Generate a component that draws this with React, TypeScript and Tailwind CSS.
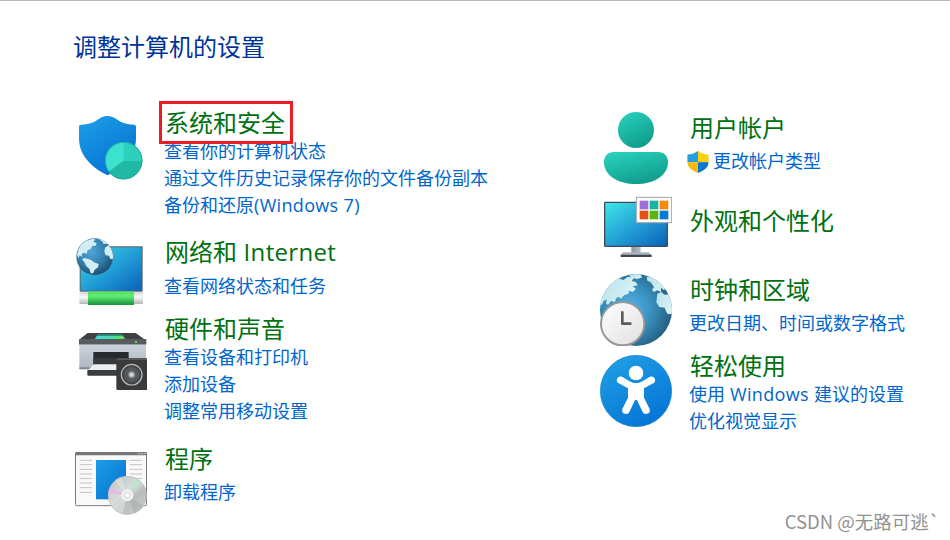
import type { ReactNode } from "react";
import clsx from "clsx";

type CategoryProps = {
  title: string;
  links?: string[];
  icon: ReactNode;
  className?: string;
  iconClass?: string;
  textClass?: string;
  listClass?: string;
  highlighted?: boolean;
  shielded?: boolean;
};

function SecurityIcon() {
  return (
    <svg viewBox="45 51 216 216" className="size-[72px]">
      <defs>
        <linearGradient id="sec" x1="0" y1="0" x2="0.6" y2="1">
          <stop offset="0" stopColor="#1ca0e8" />
          <stop offset="1" stopColor="#0672d3" />
        </linearGradient>
        <clipPath id="secPie"><circle cx="191" cy="197" r="56" /></clipPath>
      </defs>
      <path d="M142 63c-12 0-19 4-27 10-15 11-30 16-52 16-4 0-6 2-6 6v35c0 52 38 88 86 111 47-23 85-59 85-111V95c0-4-2-6-6-6-22 0-37-5-52-16-8-6-16-10-28-10Z" fill="url(#sec)" />
      <g clipPath="url(#secPie)">
        <rect x="135" y="140" width="113" height="114" fill="#3be2cd" />
        <path d="M191 197h60v60H120v-8Z" fill="#1fb9a5" />
        <path d="M191 197h60v-60h-60Z" fill="#2dd0bb" />
      </g>
      <circle cx="191" cy="197" r="55" fill="none" stroke="#1aa597" strokeWidth="2.5" />
    </svg>
  );
}

function NetworkIcon() {
  return (
    <svg viewBox="27 18 216 216" className="size-[72px]">
      <defs>
        <linearGradient id="netScreen" x1="0" y1="0" x2="1" y2="1">
          <stop offset="0" stopColor="#3bd5e4" />
          <stop offset="0.5" stopColor="#229fd6" />
          <stop offset="1" stopColor="#0a60bd" />
        </linearGradient>
        <radialGradient id="netGlobe" cx="0.4" cy="0.35" r="0.68">
          <stop offset="0" stopColor="#51a6d8" />
          <stop offset="0.55" stopColor="#3581b0" />
          <stop offset="1" stopColor="#1d4e70" />
        </radialGradient>
        <linearGradient id="cable" x1="0" y1="0" x2="0" y2="1">
          <stop offset="0" stopColor="#4fdc62" />
          <stop offset="0.35" stopColor="#62ef74" />
          <stop offset="1" stopColor="#14903a" />
        </linearGradient>
        <linearGradient id="plug" x1="0" y1="0" x2="0" y2="1">
          <stop offset="0" stopColor="#d5d5d5" />
          <stop offset="0.4" stopColor="#fafafa" />
          <stop offset="1" stopColor="#b5b5b5" />
        </linearGradient>
        <clipPath id="netClip"><circle cx="86" cy="80" r="55" /></clipPath>
      </defs>
      <rect x="41" y="49" width="189" height="136" rx="3" fill="#59656e" />
      <rect x="44" y="52" width="183" height="130" fill="url(#netScreen)" />
      <rect x="40" y="187" width="191" height="35" rx="3" fill="url(#plug)" />
      <rect x="66" y="184" width="138" height="41" fill="url(#cable)" />
      <circle cx="86" cy="80" r="55" fill="url(#netGlobe)" />
      <g clipPath="url(#netClip)" fill="#d3edf2">
        <path d="M38 57 45 44 59 33 78 27 88 28 82 36 92 39 88 48 79 47 74 57 65 60 62 71 54 68 47 72 49 81 41 76 38 85 33 74Z" />
        <path d="M48 87 57 84 66 87 76 90 84 97 98 102 96 112 86 119 81 130 74 130 70 116 61 109 56 98Z" />
        <path d="M117 53 126 46 133 51 142 65 142 88 133 87 129 77 119 76 115 65Z" />
        <path d="M97 27 111 30 121 36 124 42 112 41 110 35Z" />
      </g>
    </svg>
  );
}

function HardwareIcon() {
  return (
    <svg viewBox="27 15 216 216" className="size-[72px]">
      <defs>
        <linearGradient id="prnBody" x1="0" y1="0" x2="0" y2="1">
          <stop offset="0" stopColor="#cad2da" />
          <stop offset="1" stopColor="#aeb8c3" />
        </linearGradient>
        <linearGradient id="prnGlow" x1="0" y1="0" x2="1" y2="0">
          <stop offset="0" stopColor="#3fd8dc" />
          <stop offset="0.6" stopColor="#4ade9d" />
          <stop offset="1" stopColor="#67df48" />
        </linearGradient>
        <radialGradient id="cone">
          <stop offset="0" stopColor="#f2f5f7" />
          <stop offset="0.5" stopColor="#b0b7bd" />
          <stop offset="1" stopColor="#596067" />
        </radialGradient>
      </defs>
      <path d="M65 39h144l28 20H39Z" fill="#3d4143" />
      <path d="M96 43h72l9 14H86Z" fill="url(#prnGlow)" />
      <path d="M96 43h72l3 4H93Z" fill="#23736d" />
      <rect x="39" y="57" width="202" height="17" rx="2" fill="#585c5f" />
      <rect x="207" y="63" width="6" height="6" fill="#4cf01c" />
      <rect x="40" y="74" width="200" height="73" fill="url(#prnBody)" />
      <rect x="40" y="142" width="200" height="6" fill="#7e8790" />
      <path d="M82 96h106v46H82Z" fill="#272a2c" />
      <path d="M82 114h106v22H82Z" fill="#36393b" />
      <path d="M83 133h82v18H66Z" fill="#eeeeee" />
      <path d="M64 150h98v17H67q-3 0-3-3Z" fill="#3b3e40" />
      <rect x="151" y="115" width="93" height="95" rx="4" fill="#3a3a3a" />
      <path d="M155 115h85l4 5h-93Z" fill="#57595a" />
      <circle cx="197" cy="164" r="31" fill="#424547" stroke="#b3babd" strokeWidth="3.5" />
      <circle cx="197" cy="164" r="23" fill="#54595c" />
      <circle cx="197" cy="164" r="12" fill="url(#cone)" />
    </svg>
  );
}

function ProgramsIcon() {
  return (
    <svg viewBox="27 21 216 216" className="size-[72px]">
      <defs>
        <linearGradient id="progPage" x1="0" y1="0" x2="1" y2="1">
          <stop offset="0" stopColor="#1c9ee6" />
          <stop offset="1" stopColor="#086fcd" />
        </linearGradient>
        <linearGradient id="disc" x1="0.1" y1="0" x2="0.9" y2="1">
          <stop offset="0" stopColor="#bfc4c3" />
          <stop offset="0.45" stopColor="#d9dddc" />
          <stop offset="0.6" stopColor="#b9bdbc" />
          <stop offset="1" stopColor="#c9cdcc" />
        </linearGradient>
        <clipPath id="discClip"><circle cx="184" cy="166" r="58" /></clipPath>
      </defs>
      <rect x="28.5" y="38" width="213" height="159" rx="3" fill="#f9f9f9" stroke="#7e7c7b" strokeWidth="3" />
      <path d="M28 46v-6q0-4 4-4h206q4 0 4 4v6Z" fill="#7a7675" />
      <path d="M217 41h5M225 41h5M233 41h5" stroke="#d7d7d7" strokeWidth="3" />
      <path d="M41 61h37M41 74h37M41 88h37M41 102h37M41 115h37M41 129h37M41 143h37M41 157h37M191 61h37M191 74h37M191 88h37M191 102h37M191 115h37" stroke="#c3c3c3" strokeWidth="3" />
      <rect x="90" y="60" width="90" height="118" fill="url(#progPage)" />
      <circle cx="184" cy="166" r="58" fill="url(#disc)" />
      <g clipPath="url(#discClip)">
        <path d="M184 166 123 157l5-15Z" fill="#e9b9e4" />
        <path d="M184 166 209 112l19 16Z" fill="#bfe3cc" />
        <path d="M184 166 210 232l32-28Z" fill="#a2a6a6" opacity=".45" />
        <path d="M184 166 132 106l30-5Z" fill="#e6e9e8" opacity=".5" />
        <path d="M184 166 130 210l38 20Z" fill="#e2e5e4" opacity=".6" />
      </g>
      <circle cx="184" cy="166" r="57" fill="none" stroke="#b3b7b7" strokeWidth="1.5" />
      <circle cx="184" cy="166" r="18" fill="#f2f3f3" />
      <circle cx="184" cy="166" r="11" fill="#dfe1e1" />
      <circle cx="184" cy="166" r="6" fill="#ffffff" />
    </svg>
  );
}

function UserIcon() {
  return (
    <svg viewBox="18 36 216 216" className="size-[72px]">
      <defs>
        <linearGradient id="user" x1="0.2" y1="0" x2="0.7" y2="1">
          <stop offset="0" stopColor="#27d0bd" />
          <stop offset="1" stopColor="#109a89" />
        </linearGradient>
      </defs>
      <circle cx="126" cy="90" r="54" fill="url(#user)" />
      <path d="M60 156h132c18 0 30 12 30 30 0 42-43 66-96 66s-96-24-96-66c0-18 12-30 30-30Z" fill="url(#user)" />
    </svg>
  );
}

function AppearanceIcon() {
  return (
    <svg viewBox="18 12 216 216" className="size-[72px]">
      <defs>
        <linearGradient id="appScreen" x1="0" y1="0" x2="1" y2="1">
          <stop offset="0" stopColor="#3de6ea" />
          <stop offset="0.5" stopColor="#24a2d6" />
          <stop offset="1" stopColor="#0962bb" />
        </linearGradient>
        <linearGradient id="stand" x1="0" y1="0" x2="1" y2="0">
          <stop offset="0" stopColor="#8c959d" />
          <stop offset="1" stopColor="#b8c0c7" />
        </linearGradient>
      </defs>
      <rect x="112" y="170" width="28" height="22" fill="url(#stand)" />
      <path d="M88 187h76l9 8H79Z" fill="#adb5bc" />
      <rect x="80" y="194" width="93" height="7" rx="1" fill="#41484f" />
      <rect x="30" y="35" width="192" height="136" rx="4" fill="#434b54" />
      <rect x="34" y="39" width="184" height="128" fill="url(#appScreen)" />
      <rect x="127" y="22" width="106" height="76" fill="#fcfcfc" stroke="#a5a5a5" strokeWidth="3" />
      <rect x="137" y="32" width="26" height="26" fill="#9f70d6" />
      <rect x="167" y="32" width="26" height="26" fill="#18b2a5" />
      <rect x="197" y="32" width="26" height="26" fill="#f28b0c" />
      <rect x="137" y="62" width="26" height="26" fill="#e25014" />
      <rect x="167" y="62" width="26" height="26" fill="#57b413" />
      <rect x="197" y="62" width="26" height="26" fill="#087ad5" />
    </svg>
  );
}

function ClockIcon() {
  return (
    <svg viewBox="18 18 216 216" className="size-[72px]">
      <defs>
        <radialGradient id="clkGlobe" cx="0.4" cy="0.48" r="0.62">
          <stop offset="0" stopColor="#54b3e4" />
          <stop offset="0.45" stopColor="#3b96c6" />
          <stop offset="1" stopColor="#235c7c" />
        </radialGradient>
        <linearGradient id="face" x1="0" y1="0" x2="1" y2="1">
          <stop offset="0" stopColor="#ffffff" />
          <stop offset="1" stopColor="#e0e0e0" />
        </linearGradient>
        <linearGradient id="land" x1="0" y1="0" x2="1" y2="0.5">
          <stop offset="0" stopColor="#b9e0ec" />
          <stop offset="1" stopColor="#d8f3f5" />
        </linearGradient>
        <clipPath id="clkClip"><circle cx="126" cy="126" r="108" /></clipPath>
      </defs>
      <circle cx="126" cy="126" r="108" fill="url(#clkGlobe)" />
      <g clipPath="url(#clkClip)" fill="url(#land)">
        <path d="M22 85 35 58 55 39 71 31 89 36 101 26 120 29 113 39 125 42 131 52 116 55 126 63 116 72 105 68 103 78 91 81 80 93 75 86 66 91 63 102 50 99 43 110 36 108 38 94 30 98 24 110 18 110Z" />
        <path d="M105 22 121 17 139 19 144 28 131 33 113 30Z" />
        <path d="M158 27 171 24 190 35 209 50 218 64 208 65 200 58 202 72 189 67 180 72 174 65 180 57 170 43 160 38Z" />
        <path d="M190 77 201 72 212 80 225 79 238 105 238 137 222 139 217 132 212 119 196 117 187 103Z" />
      </g>
      <circle cx="86" cy="167" r="65" fill="url(#face)" stroke="#979797" strokeWidth="6" />
      <path d="M85 133v34h24" fill="none" stroke="#5b5b5b" strokeWidth="8" strokeLinecap="round" strokeLinejoin="round" />
    </svg>
  );
}

function AccessIcon() {
  return (
    <svg viewBox="18 15 216 216" className="size-[72px]">
      <defs>
        <linearGradient id="access" x1="0.15" y1="0" x2="0.7" y2="1">
          <stop offset="0" stopColor="#219fe5" />
          <stop offset="1" stopColor="#0474d6" />
        </linearGradient>
      </defs>
      <circle cx="126" cy="123" r="107" fill="url(#access)" stroke="#1382cc" strokeWidth="2" />
      <circle cx="126" cy="69" r="22" fill="#ffffff" />
      <path d="M84 80c14 7 26 19 42 19s28-12 42-19c13-5 22 13 10 20l-28 15v28l17 34c5 13-14 21-21 9l-17-36h-6l-17 36c-7 12-26 4-21-9l17-34v-28L74 100C62 93 71 75 84 80Z" fill="#ffffff" />
    </svg>
  );
}

function UacShield() {
  return (
    <svg viewBox="21 149 66 67" className="size-[22px] shrink-0">
      <defs>
        <clipPath id="uac"><path d="M54 149c9 6 18 10 31 11q2 0 2 3v18c0 17-14 28-33 35-19-7-33-18-33-35v-18q0-3 2-3c13-1 22-5 31-11Z" /></clipPath>
      </defs>
      <g clipPath="url(#uac)">
        <rect x="21" y="149" width="33" height="34" fill="#269fdf" />
        <rect x="54" y="149" width="33" height="34" fill="#ffcf0a" />
        <rect x="21" y="183" width="33" height="34" fill="#fcba10" />
        <rect x="54" y="183" width="33" height="34" fill="#0c78ca" />
      </g>
    </svg>
  );
}

// Latin runs are set slightly wider than the Chinese around them
function Mixed({ text }: { text: string }) {
  return (
    <>
      {text.split(/([\x20-\x7e]+)/).map((part, i) =>
        i % 2 ? <span key={i} className="tracking-[0.33px]">{part}</span> : part
      )}
    </>
  );
}

function Category({ title, links = [], icon, className, iconClass, textClass, listClass, highlighted, shielded }: CategoryProps) {
  return (
    <section className={clsx("flex items-start gap-[17px]", className)}>
      <div className={clsx("shrink-0", iconClass)}>{icon}</div>
      <div className={textClass}>
        <h2 className="relative w-fit pl-px text-2xl leading-[30px] text-[#007010]">
          <Mixed text={title} />
          {highlighted && <span className="absolute -left-[5px] -top-[7px] h-[43px] w-[134px] border-3 border-[#ed1c24]" />}
        </h2>
        <ul className={clsx("text-lg leading-[27px] text-[#0066cc]", listClass)}>
          {links.map((link) => (
            <li key={link} className={clsx(shielded && "-ml-0.5 flex items-center gap-1")}>
              {shielded && <UacShield />}
              <a><Mixed text={link} /></a>
            </li>
          ))}
        </ul>
      </div>
    </section>
  );
}

export default function App() {
  return (
    <main className="flex h-[540px] w-[950px] flex-col overflow-hidden border-t border-[#b9b9b9] bg-white font-['Open_Sans','Noto_Sans_CJK_SC',sans-serif] whitespace-nowrap">
      <h1 className="mt-[30px] ml-[73px] text-2xl leading-8 text-[#003399]">调整计算机的设置</h1>
      <div className="mt-[37px] flex min-h-0 flex-1 pl-[75px]">
        <div className="w-[525px]">
          <Category title="系统和安全" links={["查看你的计算机状态", "通过文件历史记录保存你的文件备份副本", "备份和还原(Windows 7)"]} icon={<SecurityIcon />} className="h-[132px]" iconClass="pt-3" textClass="pt-2" highlighted />
          <Category title="网络和 Internet" links={["查看网络状态和任务"]} icon={<NetworkIcon />} className="h-[78px]" iconClass="pt-1" textClass="pt-[5px]" listClass="pt-1.5" />
          <Category title="硬件和声音" links={["查看设备和打印机", "添加设备", "调整常用移动设置"]} icon={<HardwareIcon />} className="h-[130px]" iconClass="pt-[15px]" textClass="pt-1" />
          <Category title="程序" links={["卸载程序"]} icon={<ProgramsIcon />} iconClass="pt-[7px]" textClass="pt-1" listClass="pt-[5px]" />
        </div>
        <div>
          <Category title="用户帐户" links={["更改帐户类型"]} icon={<UserIcon />} className="h-[92px]" iconClass="pt-3" textClass="pt-[13px]" listClass="pt-[5px]" shielded />
          <Category title="外观和个性化" icon={<AppearanceIcon />} className="h-[78px]" iconClass="pt-0.5" textClass="pt-3.5" />
          <Category title="时钟和区域" links={["更改日期、时间或数字格式"]} icon={<ClockIcon />} className="h-[76px]" iconClass="pt-1" textClass="pt-[5px]" listClass="pt-[5px]" />
          <Category title="轻松使用" links={["使用 Windows 建议的设置", "优化视觉显示"]} icon={<AccessIcon />} iconClass="pt-[9px]" textClass="pt-[5px]" />
        </div>
      </div>
      <footer className="mr-[10px] mb-[7px] self-end font-['Noto_Sans_CJK_SC',sans-serif] text-[18.5px] leading-6 text-[#929292]">CSDN @无路可逃`</footer>
    </main>
  );
}
